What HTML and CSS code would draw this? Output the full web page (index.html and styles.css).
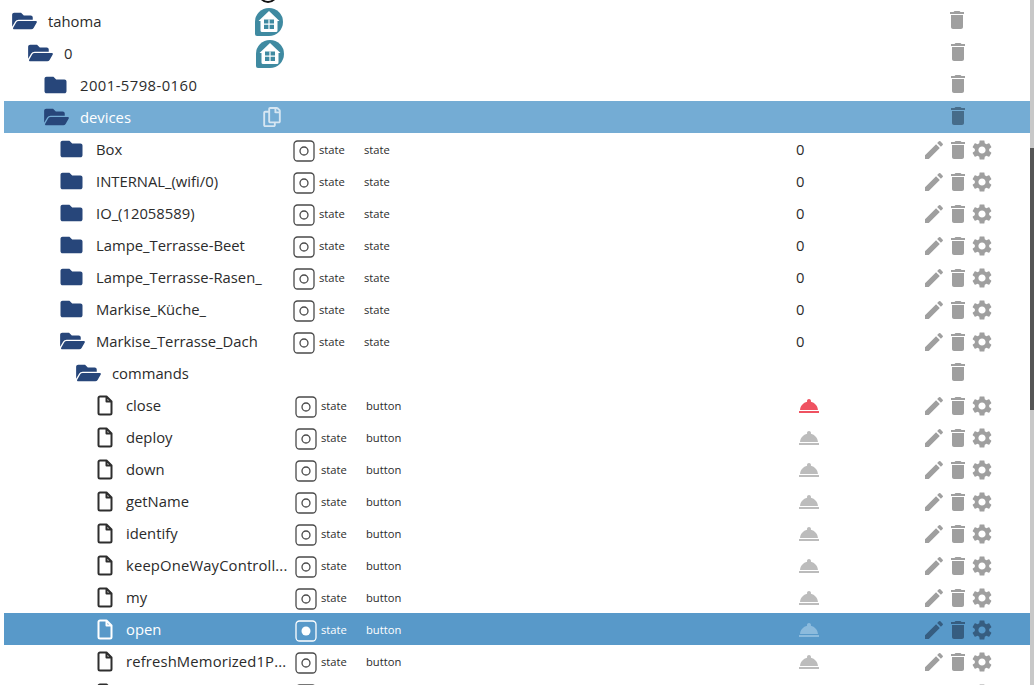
FILE: index.html
```html
<!DOCTYPE html>
<html lang="de">
<head>
<meta charset="utf-8">
<title>Objects</title>
<link rel="stylesheet" href="styles.css">
</head>
<body>
<svg class="sprite" aria-hidden="true">
  <symbol id="open" viewBox="0 0 576 512"><path d="M572.694 292.093L500.27 416.248A63.997 63.997 0 0 1 444.989 448H45.025c-18.523 0-30.064-20.093-20.731-36.093l72.424-124.155A64 64 0 0 1 152 256h399.964c18.523 0 30.064 20.093 20.73 36.093zM152 224h328v-48c0-26.51-21.49-48-48-48H272l-64-64H48C21.49 64 0 85.49 0 112v278.046l69.077-118.418C86.214 242.25 117.989 224 152 224z"/></symbol>
  <symbol id="closed" viewBox="0 0 512 512"><path d="M464 128H272l-64-64H48C21.49 64 0 85.49 0 112v288c0 26.51 21.49 48 48 48h416c26.51 0 48-21.49 48-48V176c0-26.51-21.49-48-48-48z"/></symbol>
  <symbol id="file" viewBox="0 0 16 21"><path d="M3 1.5h6.5l5 5V18a1.5 1.5 0 0 1-1.500 1.500H3A1.500 1.500 0 0 1 1.500 18V3A1.500 1.500 0 0 1 3 1.500zM9.500 1.500V6.500h5" fill="none" stroke="currentColor" stroke-width="2" stroke-linejoin="round"/></symbol>
  <symbol id="copy" viewBox="0 0 448 512"><path d="M433.941 65.941l-51.882-51.882A48 48 0 0 0 348.118 0H176c-26.51 0-48 21.49-48 48v48H48c-26.51 0-48 21.49-48 48v320c0 26.51 21.49 48 48 48h224c26.51 0 48-21.49 48-48v-48h80c26.51 0 48-21.49 48-48V99.882a48 48 0 0 0-14.059-33.941zM266 464H54a6 6 0 0 1-6-6V150a6 6 0 0 1 6-6h74v224c0 26.51 21.49 48 48 48h96v42a6 6 0 0 1-6 6zm128-96H182a6 6 0 0 1-6-6V54a6 6 0 0 1 6-6h106v88c0 13.255 10.745 24 24 24h88v202a6 6 0 0 1-6 6zm6-256h-64V48h9.632c1.591 0 3.117.632 4.243 1.757l48.368 48.368a6 6 0 0 1 1.757 4.243V112z"/></symbol>
  <symbol id="edit" viewBox="0 0 24 24"><path d="M3 17.250V21h3.750L17.810 9.940l-3.750-3.750L3 17.250zM20.710 7.040c.39-.39.39-1.020 0-1.410l-2.340-2.340a.9959.9959 0 0 0-1.410 0l-1.830 1.830 3.750 3.750 1.830-1.830z"/></symbol>
  <symbol id="trash" viewBox="0 0 24 24"><path d="M6 19c0 1.100.9 2 2 2h8c1.100 0 2-.9 2-2V7H6v12zM19 4h-3.500l-1-1h-5l-1 1H5v2h14V4z"/></symbol>
  <symbol id="gear" viewBox="0 0 24 24"><path d="M19.140 12.940c.04-.3.06-.61.06-.94 0-.32-.02-.64-.07-.94l2.030-1.580c.18-.14.23-.41.12-.61l-1.920-3.320c-.12-.22-.37-.29-.59-.22l-2.390.96c-.5-.38-1.030-.7-1.620-.94l-.36-2.540c-.04-.24-.24-.41-.48-.41h-3.840c-.24 0-.43.17-.47.41l-.36 2.540c-.59.24-1.130.57-1.620.94l-2.390-.96c-.22-.08-.47 0-.59.22L2.740 8.870c-.12.21-.08.47.12.61l2.030 1.580c-.05.3-.09.63-.09.94s.02.64.07.94l-2.030 1.580c-.18.14-.23.41-.12.61l1.920 3.320c.12.22.37.29.59.22l2.390-.96c.5.38 1.030.7 1.620.94l.36 2.540c.05.24.24.41.48.41h3.840c.24 0 .44-.17.47-.41l.36-2.540c.59-.24 1.130-.56 1.620-.94l2.390.96c.22.08.47 0 .59-.22l1.920-3.320c.12-.22.07-.47-.12-.61l-2.010-1.580zM12 15.600c-1.980 0-3.600-1.620-3.600-3.600s1.620-3.600 3.600-3.600 3.600 1.620 3.600 3.600-1.620 3.600-3.600 3.600z"/></symbol>
  <symbol id="bell" viewBox="0 0 24 24"><path d="M2 17h20v2H2zm11.840-9.210c.1-.24.16-.51.16-.79 0-1.100-.9-2-2-2s-2 .9-2 2c0 .28.06.55.16.79C6.250 8.600 3.270 11.930 3.030 16h17.940c-.24-4.070-3.220-7.400-7.130-8.210z"/></symbol>
  <symbol id="home" viewBox="0 0 28 28"><path d="M14 0a14 14 0 0 1 0 28H2a2 2 0 0 1-2-2V14A14 14 0 0 1 14 0z" fill="#3f8aa1"/><path d="M14 3 24.500 13H22.500V22.500a1.500 1.500 0 0 1-1.500 1.500H7a1.500 1.500 0 0 1-1.500-1.500V13H3.500z" fill="#fff"/><path d="M9 11.500h10v9.500H9z" fill="#3f8aa1"/><path d="M13.400 11.500h1.200v9.500h-1.200zM9 15.600h10v1.200H9z" fill="#fff"/></symbol>
  <symbol id="state" viewBox="0 0 22 22"><rect x="1" y="1" width="20" height="20" rx="3.500" fill="none" stroke="currentColor" stroke-width="1.300"/><circle cx="11" cy="11" r="4" fill="none" stroke="currentColor" stroke-width="1.300"/></symbol>
  <symbol id="state-on" viewBox="0 0 22 22"><rect x="1" y="1" width="20" height="20" rx="3.500" fill="none" stroke="currentColor" stroke-width="1.300"/><circle cx="11" cy="11" r="4.500" fill="currentColor"/></symbol>
</svg>

<div class="page">
  <main class="tree">
    <div class="clip"><span class="clip-ring"></span></div>

    <div class="row head d0"><div class="name"><svg class="ico-open"><use href="#open"/></svg><span class="label">tahoma</span><svg class="home"><use href="#home"/></svg></div><div class="actions"><span class="act"></span><svg class="act trash-shift"><use href="#trash"/></svg><span class="act"></span></div></div>
    <div class="row head d1"><div class="name"><svg class="ico-open"><use href="#open"/></svg><span class="label">0</span><svg class="home"><use href="#home"/></svg></div><div class="actions"><span class="act"></span><svg class="act"><use href="#trash"/></svg><span class="act"></span></div></div>
    <div class="row head d2"><div class="name"><svg class="ico-closed"><use href="#closed"/></svg><span class="label num">2001-5798-0160</span></div><div class="actions"><span class="act"></span><svg class="act"><use href="#trash"/></svg><span class="act"></span></div></div>
    <div class="row head d2 sel-light"><div class="name"><svg class="ico-open"><use href="#open"/></svg><span class="label">devices</span><svg class="copy"><use href="#copy"/></svg></div><div class="actions"><span class="act"></span><svg class="act"><use href="#trash"/></svg><span class="act"></span></div></div>

    <div class="row d3"><div class="name"><svg class="ico-closed"><use href="#closed"/></svg><span class="label">Box</span></div><div class="meta"><svg class="state"><use href="#state"/></svg><span class="role">state</span><span class="type">state</span></div><div class="value">0</div><div class="actions"><svg class="act"><use href="#edit"/></svg><svg class="act"><use href="#trash"/></svg><svg class="act"><use href="#gear"/></svg></div></div>
    <div class="row d3"><div class="name"><svg class="ico-closed"><use href="#closed"/></svg><span class="label">INTERNAL_(wifi/0)</span></div><div class="meta"><svg class="state"><use href="#state"/></svg><span class="role">state</span><span class="type">state</span></div><div class="value">0</div><div class="actions"><svg class="act"><use href="#edit"/></svg><svg class="act"><use href="#trash"/></svg><svg class="act"><use href="#gear"/></svg></div></div>
    <div class="row d3"><div class="name"><svg class="ico-closed"><use href="#closed"/></svg><span class="label">IO_(12058589)</span></div><div class="meta"><svg class="state"><use href="#state"/></svg><span class="role">state</span><span class="type">state</span></div><div class="value">0</div><div class="actions"><svg class="act"><use href="#edit"/></svg><svg class="act"><use href="#trash"/></svg><svg class="act"><use href="#gear"/></svg></div></div>
    <div class="row d3"><div class="name"><svg class="ico-closed"><use href="#closed"/></svg><span class="label">Lampe_Terrasse-Beet</span></div><div class="meta"><svg class="state"><use href="#state"/></svg><span class="role">state</span><span class="type">state</span></div><div class="value">0</div><div class="actions"><svg class="act"><use href="#edit"/></svg><svg class="act"><use href="#trash"/></svg><svg class="act"><use href="#gear"/></svg></div></div>
    <div class="row d3"><div class="name"><svg class="ico-closed"><use href="#closed"/></svg><span class="label">Lampe_Terrasse-Rasen_</span></div><div class="meta"><svg class="state"><use href="#state"/></svg><span class="role">state</span><span class="type">state</span></div><div class="value">0</div><div class="actions"><svg class="act"><use href="#edit"/></svg><svg class="act"><use href="#trash"/></svg><svg class="act"><use href="#gear"/></svg></div></div>
    <div class="row d3"><div class="name"><svg class="ico-closed"><use href="#closed"/></svg><span class="label">Markise_Küche_</span></div><div class="meta"><svg class="state"><use href="#state"/></svg><span class="role">state</span><span class="type">state</span></div><div class="value">0</div><div class="actions"><svg class="act"><use href="#edit"/></svg><svg class="act"><use href="#trash"/></svg><svg class="act"><use href="#gear"/></svg></div></div>
    <div class="row d3"><div class="name"><svg class="ico-open"><use href="#open"/></svg><span class="label">Markise_Terrasse_Dach</span></div><div class="meta"><svg class="state"><use href="#state"/></svg><span class="role">state</span><span class="type">state</span></div><div class="value">0</div><div class="actions"><svg class="act"><use href="#edit"/></svg><svg class="act"><use href="#trash"/></svg><svg class="act"><use href="#gear"/></svg></div></div>

    <div class="row head d4"><div class="name"><svg class="ico-open"><use href="#open"/></svg><span class="label">commands</span></div><div class="actions"><span class="act"></span><svg class="act"><use href="#trash"/></svg><span class="act"></span></div></div>

    <div class="row d5 leaf"><div class="name"><svg class="ico-file"><use href="#file"/></svg><span class="label">close</span></div><div class="meta"><svg class="state"><use href="#state"/></svg><span class="role">state</span><span class="type">button</span></div><div class="value"><svg class="bell bell-on"><use href="#bell"/></svg></div><div class="actions"><svg class="act"><use href="#edit"/></svg><svg class="act"><use href="#trash"/></svg><svg class="act"><use href="#gear"/></svg></div></div>
    <div class="row d5 leaf"><div class="name"><svg class="ico-file"><use href="#file"/></svg><span class="label">deploy</span></div><div class="meta"><svg class="state"><use href="#state"/></svg><span class="role">state</span><span class="type">button</span></div><div class="value"><svg class="bell"><use href="#bell"/></svg></div><div class="actions"><svg class="act"><use href="#edit"/></svg><svg class="act"><use href="#trash"/></svg><svg class="act"><use href="#gear"/></svg></div></div>
    <div class="row d5 leaf"><div class="name"><svg class="ico-file"><use href="#file"/></svg><span class="label">down</span></div><div class="meta"><svg class="state"><use href="#state"/></svg><span class="role">state</span><span class="type">button</span></div><div class="value"><svg class="bell"><use href="#bell"/></svg></div><div class="actions"><svg class="act"><use href="#edit"/></svg><svg class="act"><use href="#trash"/></svg><svg class="act"><use href="#gear"/></svg></div></div>
    <div class="row d5 leaf"><div class="name"><svg class="ico-file"><use href="#file"/></svg><span class="label">getName</span></div><div class="meta"><svg class="state"><use href="#state"/></svg><span class="role">state</span><span class="type">button</span></div><div class="value"><svg class="bell"><use href="#bell"/></svg></div><div class="actions"><svg class="act"><use href="#edit"/></svg><svg class="act"><use href="#trash"/></svg><svg class="act"><use href="#gear"/></svg></div></div>
    <div class="row d5 leaf"><div class="name"><svg class="ico-file"><use href="#file"/></svg><span class="label">identify</span></div><div class="meta"><svg class="state"><use href="#state"/></svg><span class="role">state</span><span class="type">button</span></div><div class="value"><svg class="bell"><use href="#bell"/></svg></div><div class="actions"><svg class="act"><use href="#edit"/></svg><svg class="act"><use href="#trash"/></svg><svg class="act"><use href="#gear"/></svg></div></div>
    <div class="row d5 leaf"><div class="name"><svg class="ico-file"><use href="#file"/></svg><span class="label cut">keepOneWayControll...</span></div><div class="meta"><svg class="state"><use href="#state"/></svg><span class="role">state</span><span class="type">button</span></div><div class="value"><svg class="bell"><use href="#bell"/></svg></div><div class="actions"><svg class="act"><use href="#edit"/></svg><svg class="act"><use href="#trash"/></svg><svg class="act"><use href="#gear"/></svg></div></div>
    <div class="row d5 leaf"><div class="name"><svg class="ico-file"><use href="#file"/></svg><span class="label">my</span></div><div class="meta"><svg class="state"><use href="#state"/></svg><span class="role">state</span><span class="type">button</span></div><div class="value"><svg class="bell"><use href="#bell"/></svg></div><div class="actions"><svg class="act"><use href="#edit"/></svg><svg class="act"><use href="#trash"/></svg><svg class="act"><use href="#gear"/></svg></div></div>
    <div class="row d5 leaf sel"><div class="name"><svg class="ico-file"><use href="#file"/></svg><span class="label">open</span></div><div class="meta"><svg class="state"><use href="#state-on"/></svg><span class="role">state</span><span class="type">button</span></div><div class="value"><svg class="bell"><use href="#bell"/></svg></div><div class="actions"><svg class="act"><use href="#edit"/></svg><svg class="act"><use href="#trash"/></svg><svg class="act"><use href="#gear"/></svg></div></div>
    <div class="row d5 leaf"><div class="name"><svg class="ico-file"><use href="#file"/></svg><span class="label cut">refreshMemorized1P...</span></div><div class="meta"><svg class="state"><use href="#state"/></svg><span class="role">state</span><span class="type">button</span></div><div class="value"><svg class="bell"><use href="#bell"/></svg></div><div class="actions"><svg class="act"><use href="#edit"/></svg><svg class="act"><use href="#trash"/></svg><svg class="act"><use href="#gear"/></svg></div></div>
    <div class="row d5 leaf"><div class="name"><svg class="ico-file"><use href="#file"/></svg><span class="label"></span></div><div class="meta"><svg class="state"><use href="#state"/></svg><span class="role"></span><span class="type"></span></div><div class="value"></div><div class="actions"><svg class="act"><use href="#edit"/></svg><svg class="act"><use href="#trash"/></svg><svg class="act"><use href="#gear"/></svg></div></div>
  </main>
  <div class="scrollbar"><div class="thumb"></div></div>
</div>
</body>
</html>
```
FILE: styles.css
```css
* { box-sizing: border-box; }
html, body { margin: 0; height: 685px; overflow: hidden; background: #fff; }
body { font-family: "Open Sans", "Noto Sans", sans-serif; color: #2b2b2b; }
.sprite { width: 0; height: 0; position: absolute; }
.page { display: flex; height: 685px; overflow: hidden; }
.tree { flex: 1; min-width: 0; padding-left: 4px; }
.scrollbar { width: 4px; background: #c8c8c8; flex: none; }
.thumb { margin-top: 148px; height: 262px; background: #555; }
.clip { height: 5px; overflow: hidden; display: flex; align-items: flex-end; padding-left: 254px; }
.clip-ring { display: block; width: 20px; height: 20px; border: 2px solid #111; border-radius: 50%; flex: none; margin-bottom: 2px; }

.row { display: flex; align-items: center; height: 32px; flex: none; padding-right: 36px; }
.name { width: 286px; flex: none; height: 32px; display: flex; align-items: center; position: relative; font-size: 14.8px; }
.d0 .name { padding-left: 8px; }
.d1 .name { padding-left: 24px; }
.d2 .name { padding-left: 40px; }
.d3 .name { padding-left: 56px; }
.d4 .name { padding-left: 72px; }
.d5 .name { padding-left: 93px; }

.ico-open, .ico-closed { width: 25px; height: 22px; fill: #27467a; flex: none; }
.ico-closed { width: 23px; margin-right: 2px; }
.ico-file { width: 16px; height: 21px; color: #2e2e2e; flex: none; }
.label { margin-left: 11px; white-space: nowrap; }
.leaf .label { margin-left: 13px; }
.num { letter-spacing: .45px; }
.cut { letter-spacing: .15px; }
.home { position: absolute; left: 251px; top: 3px; width: 28px; height: 28px; }
.d1 .home { left: 252px; }
.copy { position: absolute; left: 259px; top: 6px; width: 18px; height: 20px; fill: #d6e6f2; }

.meta { width: 496px; flex: none; display: flex; align-items: center; font-size: 11.2px; padding-left: 3px; }
.leaf .meta { padding-left: 5px; }
.state { width: 22px; height: 22px; color: #4a4a4a; flex: none; margin-top: 3px; }
.role { margin-left: 4px; width: 45px; }
.type { white-space: nowrap; }
.value { width: 136px; flex: none; font-size: 14.8px; padding-left: 10px; }
.leaf .value { display: flex; padding-left: 11px; }
.bell { width: 24px; height: 24px; fill: #bcbcbc; margin-top: 1px; }
.bell-on { fill: #ef5261; }
.actions { display: flex; flex: none; width: 72px; margin-left: auto; align-self: flex-start; margin-top: 5px; }
.head .actions { margin-top: 3px; }
.act { width: 24px; height: 24px; fill: #9f9f9f; flex: none; }
.trash-shift { margin-left: -1px; }

.sel-light { background: #74acd4; }
.sel-light .label { color: #fff; }
.sel-light .act { fill: #466c8a; }
.sel { background: #5899c9; color: #fff; }
.sel .ico-file, .sel .state { color: #fff; }
.sel .bell { fill: #8cbbdd; }
.sel .act { fill: #365d80; }
```
